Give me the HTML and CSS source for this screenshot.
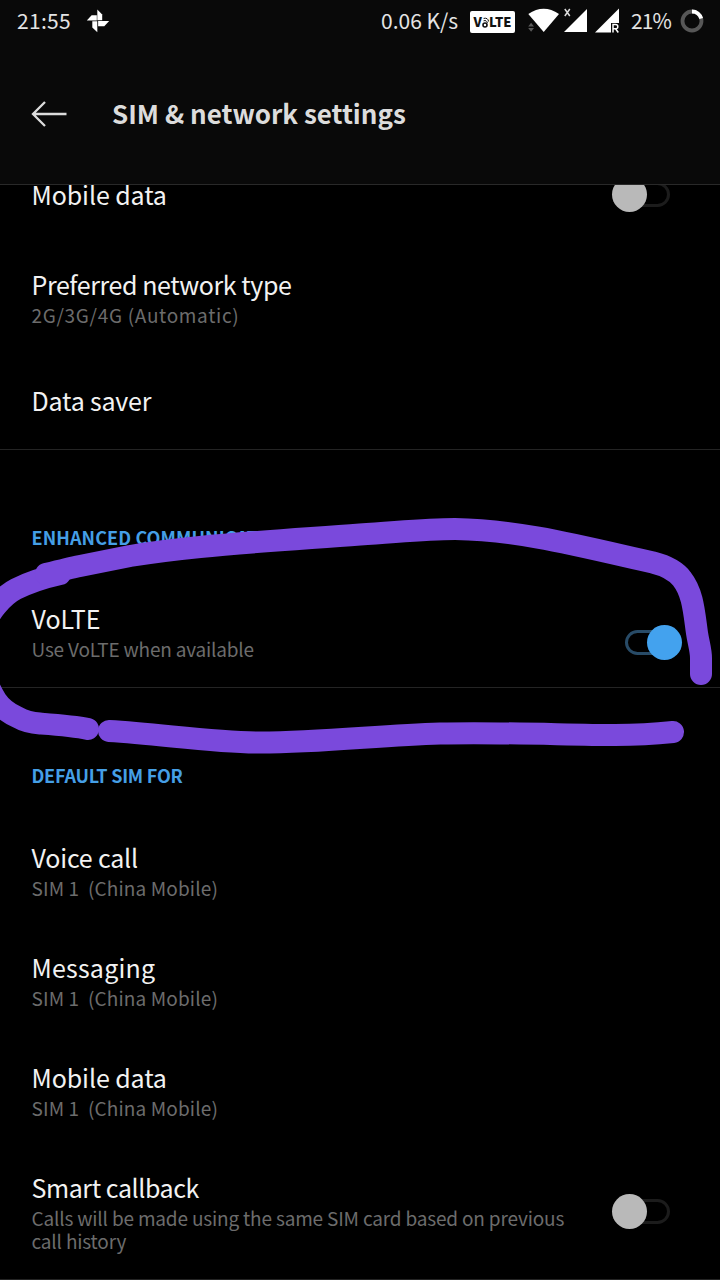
FILE: index.html
```html
<!DOCTYPE html>
<html lang="en">
<head>
<meta charset="utf-8">
<title>SIM &amp; network settings</title>
<link rel="stylesheet" href="styles.css">
</head>
<body>
<div class="screen">
  <header class="top">
    <div class="status">
      <span class="clock">21:55</span>
      <svg class="pinwheel" width="24" height="24" viewBox="0 0 24 24" fill="#fff">
        <path d="M11.300 .5 16.200 5.400V11.300H11.300Z"/>
        <path d="M23.200 11.900 18.300 17.200H12.100V11.900Z"/>
        <path d="M11.300 23.300 6.300 18.400V12.200H11.300Z"/>
        <path d="M.8 11.500 5.600 6.300H10.800V11.500Z"/>
      </svg>
      <span class="speed">0.06 K/s</span>
      <span class="volte">V<svg class="volte-o" width="7" height="14" viewBox="0 0 7 14" fill="none" stroke="#111"><circle cx="3" cy="10" r="2" stroke-width="1.600"/><path d="M1.600 5.800Q4.600 4.800 5.400 8M1.600 3.400Q6 2.400 6.600 6.500" stroke-width="1"/></svg>LTE</span>
      <svg class="signals" width="94" height="28" viewBox="0 0 94 28">
        <path d="M.3 7Q15.700-3.700 31 7L15.700 25Z" fill="#fff"/>
        <path d="M.2 19.500 3.100 15.700 6 19.500ZM.2 21H6L3.100 24.800Z" fill="#5a5a5a"/>
        <path d="M36.800 2 41.800 9M41.800 2 36.800 9" stroke="#ddd" stroke-width="1.500"/>
        <path d="M59 2V25H36Z" fill="#fff"/>
        <path d="M91 1.500V16H83V25.500H67Z" fill="#fff"/>
        <path d="M85 25.500V17.600H87.500Q89.800 17.600 89.800 19.700T87.500 21.800H85M87.500 21.800 90.300 25.500" fill="none" stroke="#fff" stroke-width="1.500"/>
      </svg>
      <span class="percent">21%</span>
      <svg class="battery" width="24" height="24" viewBox="0 0 24 24" fill="none" stroke-width="3.800">
        <circle cx="12" cy="12" r="9.500" stroke="#575757"/>
        <path d="M12 2.500A9.500 9.500 0 0 1 21.200 9.600" stroke="#fff"/>
      </svg>
    </div>
    <div class="appbar">
      <svg class="back" width="36" height="28" viewBox="0 0 36 28" fill="none" stroke="#dcdcdc" stroke-width="2.300"><path d="M35.500 14H2M14 2 2 14 14 26"/></svg>
      <h1 class="heading">SIM &amp; network settings</h1>
    </div>
  </header>

  <main class="list">
    <div class="row row-scrolled">
      <div class="title t-mobile">Mobile data</div>
      <span class="switch"></span>
    </div>
    <div class="row">
      <div><div class="title t-pref">Preferred network type</div><div class="sub s-pref">2G/3G/4G (Automatic)</div></div>
    </div>
    <div class="row row-single">
      <div class="title t-saver">Data saver</div>
    </div>
    <h2 class="section section-first">ENHANCED COMMUNICATIONS</h2>
    <div class="row">
      <div><div class="title t-volte">VoLTE</div><div class="sub s-volte">Use VoLTE when available</div></div>
      <span class="switch switch-on"></span>
    </div>
    <h2 class="section">DEFAULT SIM FOR</h2>
    <div class="row">
      <div><div class="title t-voice">Voice call</div><div class="sub s-sim">SIM 1&nbsp; (China Mobile)</div></div>
    </div>
    <div class="row">
      <div><div class="title t-msg">Messaging</div><div class="sub s-sim">SIM 1&nbsp; (China Mobile)</div></div>
    </div>
    <div class="row">
      <div><div class="title t-mobile">Mobile data</div><div class="sub s-sim">SIM 1&nbsp; (China Mobile)</div></div>
    </div>
    <div class="row row-last">
      <div><div class="title t-smart">Smart callback</div><div class="sub s-smart">Calls will be made using the same SIM card based on previous call history</div></div>
      <span class="switch"></span>
    </div>
  </main>

  <svg class="marker" width="720" height="1280" viewBox="0 0 720 1280">
    <path d="M60 574C42 578 28 583 16 589C8 593 2 599-4 606C-24 630-24 668-4 700C0 706 8 713 17 717C24 721 32 723 40 723.500C60 725 74 726 88 729"/>
    <path d="M46 574C58 571 70 568 80 566L130 556C160 551 180 549 200 547C250 542 300 539 360 534.500C400 532 425 529 455 529C520 530 580 546 653 562.500C667 566 676 571 682 579C693 593 694 612 697 633C698.500 643 701 650 701 658V674"/>
    <path d="M109 731C160 734 210 742 256 742.500C320 743 380 735 440 733.500C500 732 570 735 615 735Q645 735 673 732"/>
  </svg>
</div>
</body>
</html>
```
FILE: styles.css
```css
* { box-sizing: border-box; }
body { margin: 0; background: #000; }
.screen {
  position: relative;
  width: 720px;
  height: 1280px;
  overflow: hidden;
  background: #000;
  color: #f2f2f2;
  font-family: "Noto Sans CJK SC", "Noto Sans", sans-serif;
}
.top {
  position: relative;
  z-index: 1;
  height: 185px;
  background: #090909;
  border-bottom: 1px solid #292929;
}
.status {
  display: flex;
  align-items: center;
  height: 42px;
  padding: 0 16px 0 17px;
  font-size: 21px;
  line-height: 30px;
  color: #e4e4e4;
  white-space: nowrap;
}
.clock { width: 69px; padding-bottom: 2px; letter-spacing: .3px; }
.pinwheel { margin-right: 271px; }
.speed { width: 89px; padding-bottom: 2px; }
.volte {
  display: flex;
  align-items: center;
  justify-content: center;
  width: 45px;
  height: 22px;
  margin: 1px 13px 0 0;
  border-radius: 2px;
  background: #fff;
  color: #111;
  font-size: 13px;
  font-weight: 900;
}
.signals { flex: none; margin-right: 9px; }
.percent { width: 49px; padding-bottom: 2px; letter-spacing: -.9px; }
.battery { flex: none; }
.appbar { display: flex; align-items: center; height: 144px; padding-left: 31px; }
.back { margin-right: 45px; }
.heading { margin: 0; padding-bottom: 2px; font-size: 26px; line-height: 36px; font-weight: 700; color: #dcdcdc; white-space: nowrap; }
.list { margin-top: -36px; }
.row {
  display: flex;
  justify-content: space-between;
  align-items: center;
  height: 110px;
  padding: 0 50px 2px 31.5px;
}
.row-scrolled { height: 94px; padding-bottom: 3px; }
.row-single { height: 96px; padding-top: 1px; }
.row-last { height: 134px; border-bottom: 1px solid #242424; }
.title { margin-top: -2px; font-size: 25px; line-height: 34px; white-space: nowrap; }
.sub { margin-top: 2px; font-size: 19px; line-height: 23px; color: #6c6c6c; white-space: nowrap; }
.t-pref, .t-smart { letter-spacing: -.42px; }
.t-mobile { letter-spacing: -.1px; }
.t-saver, .t-voice { letter-spacing: -.2px; }
.t-msg { letter-spacing: .2px; }
.s-pref { letter-spacing: .68px; }
.s-volte { letter-spacing: -.2px; }
.s-sim { letter-spacing: .13px; }
.s-smart { width: 545px; letter-spacing: -.17px; white-space: normal; }
.section {
  height: 129px;
  margin: 0;
  padding: 73px 0 0 31.5px;
  border-top: 1px solid #242424;
  font-size: 18px;
  line-height: 28px;
  font-weight: 700;
  letter-spacing: -.25px;
  color: #459fe6;
}
.section-first { height: 128px; letter-spacing: .1px; }
.switch { position: relative; flex: none; width: 58px; height: 35px; }
.switch::before {
  content: "";
  position: absolute;
  inset: 5px 0 5px 13px;
  border: 3px solid #1c1c1c;
  border-radius: 13px;
}
.switch::after {
  content: "";
  position: absolute;
  left: 0;
  top: 0;
  width: 35px;
  height: 35px;
  border-radius: 50%;
  background: #b9b9b9;
}
.switch-on { margin: 22px -13px 0 0; }
.switch-on::before { inset: 5px 13px 5px 0; border-color: #284b67; }
.switch-on::after { left: 22px; background: #43a2ee; }
.marker {
  position: absolute;
  left: 0;
  top: 0;
  z-index: 2;
  fill: none;
  stroke: #7a49dc;
  stroke-width: 22;
  stroke-linecap: round;
  stroke-linejoin: round;
}
```
